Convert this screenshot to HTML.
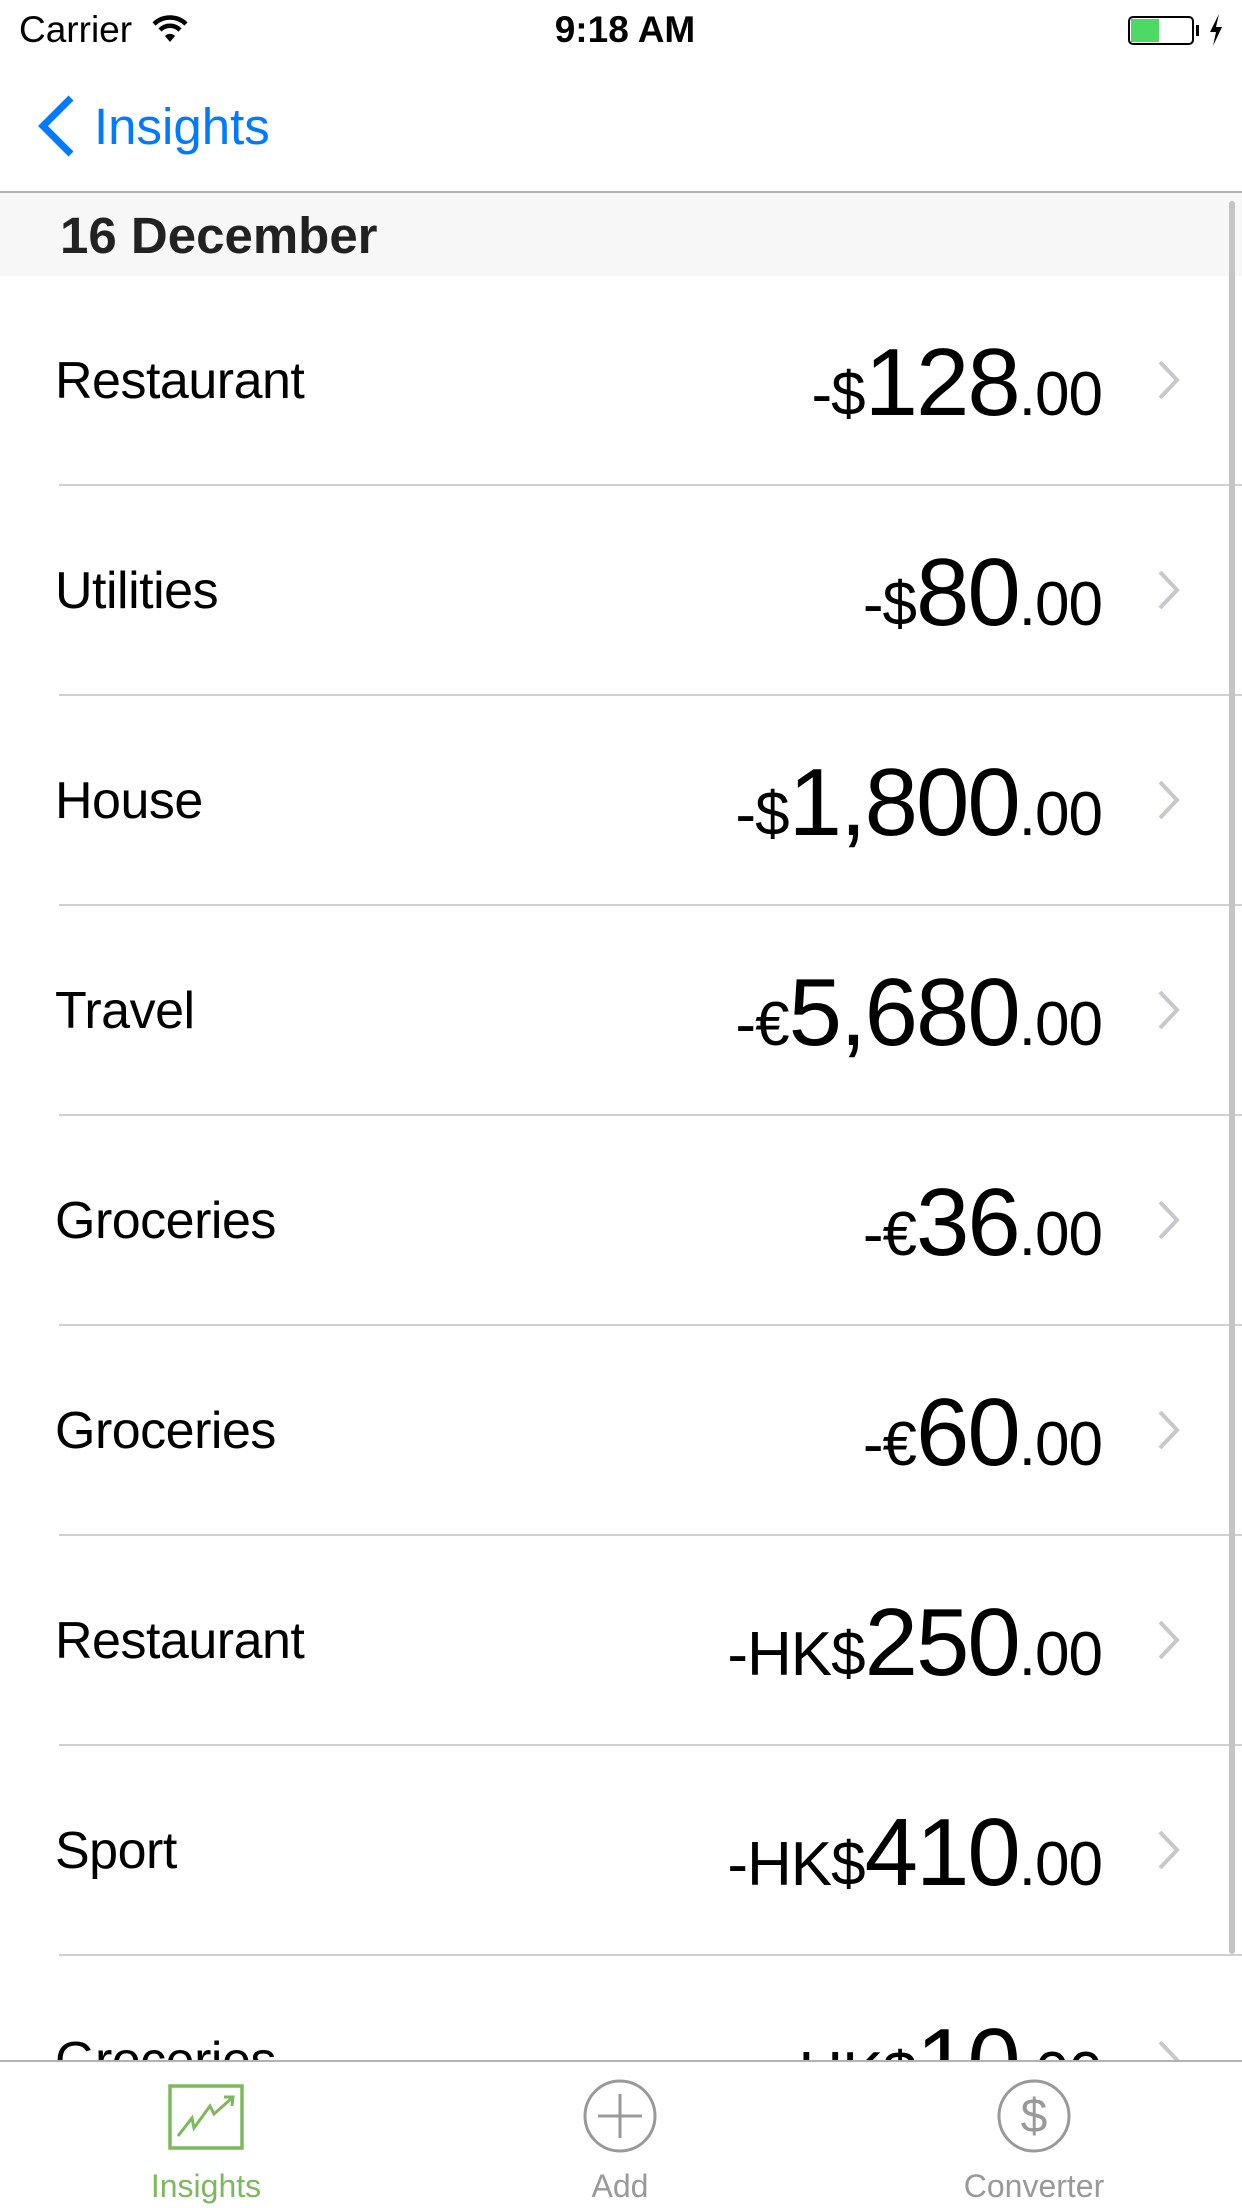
<!DOCTYPE html>
<html><head><meta charset="utf-8"><style>
*{margin:0;padding:0;box-sizing:border-box}
body{width:1242px;height:2208px;background:#fff;position:relative;overflow:hidden;font-family:"Liberation Sans",sans-serif;color:#000}
.abs{position:absolute}
.row{position:absolute;left:0;width:1242px;height:210px}
.row .lbl{position:absolute;left:55px;top:0;height:210px;line-height:210px;font-size:52px;letter-spacing:-0.5px}
.row .amt{position:absolute;right:140px;top:0;height:210px;line-height:214px;white-space:nowrap;letter-spacing:-1px}
.amt .s{font-size:62px}
.amt .b{font-size:96px;letter-spacing:-2px}
.row .sep{position:absolute;left:59px;right:0;bottom:0;height:2px;background:#d0d0d4}
.chev{position:absolute;left:1156px;top:82px}
</style></head><body>
<!-- status bar -->
<div class="abs" style="left:19px;top:7px;font-size:37px;line-height:46px">Carrier</div>
<svg class="abs" style="left:152px;top:14px" width="36" height="30" viewBox="0 0 36 30"><path d="M2 10 A23 23 0 0 1 34 10" stroke="#000" stroke-width="4.5" fill="none"/><path d="M8 16 A14 14 0 0 1 28 16" stroke="#000" stroke-width="4.5" fill="none"/><path d="M13 22 L18 28 L23 22 A7 7 0 0 0 13 22Z" fill="#000"/></svg>
<div class="abs" style="left:500px;width:250px;text-align:center;top:7px;font-size:37px;line-height:46px;font-weight:bold">9:18 AM</div>
<div class="abs" style="left:1128px;top:16px;width:66px;height:29px;border:2px solid #000;border-radius:5px"></div>
<div class="abs" style="left:1131px;top:19px;width:28px;height:23px;background:#4cd964"></div>
<div class="abs" style="left:1196px;top:25px;width:3px;height:11px;background:#000"></div>
<svg class="abs" style="left:1208px;top:14px" width="16" height="32" viewBox="0 0 16 32"><path d="M11 0 L2 18 L8 18 L5 32 L14 13 L8 13 Z" fill="#000"/></svg>
<!-- nav -->
<svg class="abs" style="left:35px;top:94px" width="42" height="64" viewBox="0 0 42 64"><path d="M36 4 L8 32 L36 60" stroke="#007aff" stroke-width="7" fill="none"/></svg>
<div class="abs" style="left:94px;top:96px;font-size:51px;line-height:62px;color:#007aff">Insights</div>
<div class="abs" style="left:0;top:191px;width:1242px;height:2px;background:#b2b2b2"></div>
<!-- section header -->
<div class="abs" style="left:0;top:193px;width:1242px;height:83px;background:#f7f7f7"></div>
<div class="abs" style="left:60px;top:193px;height:83px;line-height:85px;font-size:51px;font-weight:bold;color:#222">16 December</div>

<div class="row" style="top:276px"><div class="lbl">Restaurant</div><div class="amt"><span class="s">-$</span><span class="b">128</span><span class="s">.00</span></div><svg class="chev" width="26" height="44" viewBox="0 0 26 44"><path d="M4 4 L21 22 L4 40" stroke="#c7c7cc" stroke-width="4" fill="none"/></svg><div class="sep"></div></div>
<div class="row" style="top:486px"><div class="lbl">Utilities</div><div class="amt"><span class="s">-$</span><span class="b">80</span><span class="s">.00</span></div><svg class="chev" width="26" height="44" viewBox="0 0 26 44"><path d="M4 4 L21 22 L4 40" stroke="#c7c7cc" stroke-width="4" fill="none"/></svg><div class="sep"></div></div>
<div class="row" style="top:696px"><div class="lbl">House</div><div class="amt"><span class="s">-$</span><span class="b">1,800</span><span class="s">.00</span></div><svg class="chev" width="26" height="44" viewBox="0 0 26 44"><path d="M4 4 L21 22 L4 40" stroke="#c7c7cc" stroke-width="4" fill="none"/></svg><div class="sep"></div></div>
<div class="row" style="top:906px"><div class="lbl">Travel</div><div class="amt"><span class="s">-€</span><span class="b">5,680</span><span class="s">.00</span></div><svg class="chev" width="26" height="44" viewBox="0 0 26 44"><path d="M4 4 L21 22 L4 40" stroke="#c7c7cc" stroke-width="4" fill="none"/></svg><div class="sep"></div></div>
<div class="row" style="top:1116px"><div class="lbl">Groceries</div><div class="amt"><span class="s">-€</span><span class="b">36</span><span class="s">.00</span></div><svg class="chev" width="26" height="44" viewBox="0 0 26 44"><path d="M4 4 L21 22 L4 40" stroke="#c7c7cc" stroke-width="4" fill="none"/></svg><div class="sep"></div></div>
<div class="row" style="top:1326px"><div class="lbl">Groceries</div><div class="amt"><span class="s">-€</span><span class="b">60</span><span class="s">.00</span></div><svg class="chev" width="26" height="44" viewBox="0 0 26 44"><path d="M4 4 L21 22 L4 40" stroke="#c7c7cc" stroke-width="4" fill="none"/></svg><div class="sep"></div></div>
<div class="row" style="top:1536px"><div class="lbl">Restaurant</div><div class="amt"><span class="s">-HK$</span><span class="b">250</span><span class="s">.00</span></div><svg class="chev" width="26" height="44" viewBox="0 0 26 44"><path d="M4 4 L21 22 L4 40" stroke="#c7c7cc" stroke-width="4" fill="none"/></svg><div class="sep"></div></div>
<div class="row" style="top:1746px"><div class="lbl">Sport</div><div class="amt"><span class="s">-HK$</span><span class="b">410</span><span class="s">.00</span></div><svg class="chev" width="26" height="44" viewBox="0 0 26 44"><path d="M4 4 L21 22 L4 40" stroke="#c7c7cc" stroke-width="4" fill="none"/></svg><div class="sep"></div></div>
<div class="row" style="top:1956px"><div class="lbl">Groceries</div><div class="amt"><span class="s">-HK$</span><span class="b">10</span><span class="s">.00</span></div><svg class="chev" width="26" height="44" viewBox="0 0 26 44"><path d="M4 4 L21 22 L4 40" stroke="#c7c7cc" stroke-width="4" fill="none"/></svg></div>

<!-- scrollbar -->
<div class="abs" style="left:1229px;top:201px;width:6px;height:1753px;background:#c4c4c4;border-radius:3px"></div>

<!-- tab bar -->
<div class="abs" style="left:0;top:2060px;width:1242px;height:148px;background:#fff;border-top:2px solid #b2b2b2"></div>
<svg class="abs" style="left:168px;top:2084px" width="76" height="66" viewBox="0 0 76 66"><rect x="2" y="2" width="72" height="62" fill="none" stroke="#7cb85c" stroke-width="3.5"/><path d="M10 52 L24 34 L26 44 L42 22 L46 30 L64 14" stroke="#7cb85c" stroke-width="3" fill="none"/><path d="M56 13 L65 13 L64 22" stroke="#7cb85c" stroke-width="3" fill="none"/></svg>
<div class="abs" style="left:106px;width:200px;text-align:center;top:2166px;font-size:32px;line-height:40px;color:#7cb85c">Insights</div>
<svg class="abs" style="left:582px;top:2078px" width="76" height="76" viewBox="0 0 76 76"><circle cx="38" cy="38" r="35" fill="none" stroke="#999" stroke-width="3"/><path d="M38 16 V60 M16 38 H60" stroke="#999" stroke-width="3"/></svg>
<div class="abs" style="left:520px;width:200px;text-align:center;top:2166px;font-size:32px;line-height:40px;color:#999">Add</div>
<svg class="abs" style="left:996px;top:2078px" width="76" height="76" viewBox="0 0 76 76"><circle cx="38" cy="38" r="35" fill="none" stroke="#999" stroke-width="3"/><text x="38" y="54" text-anchor="middle" font-family="Liberation Sans" font-size="48" fill="#999">$</text></svg>
<div class="abs" style="left:924px;width:220px;text-align:center;top:2166px;font-size:32px;line-height:40px;color:#999">Converter</div>
</body></html>
